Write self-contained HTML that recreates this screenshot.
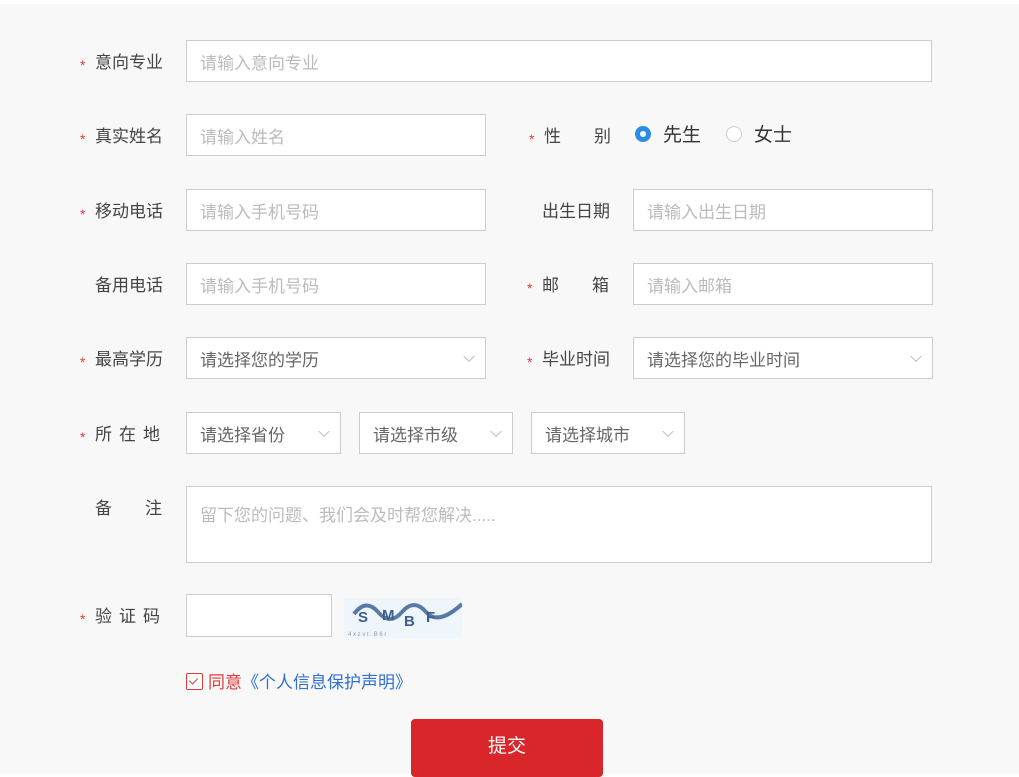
<!DOCTYPE html>
<html><head><meta charset="utf-8"><style>
body{margin:0;width:1019px;height:774px;background:#fff;font-family:"Liberation Sans","Noto Sans CJK SC",sans-serif;overflow:hidden;position:relative}
.bg{position:absolute;left:0;top:4px;width:1019px;height:770px;background:#f8f8f8}
.a{position:absolute}
.lab{position:absolute;font-size:17px;color:#444;line-height:20px;margin-top:2px}
.st{position:absolute;color:#e4393c;font-size:14px;line-height:20px;margin-top:2px}
.in{position:absolute;background:#fff;border:1px solid #ccc;box-sizing:border-box;font-size:17px;color:#bbb;padding-left:13px;display:flex;align-items:center}
.sel{color:#666}
.chev{position:absolute;right:12px;top:50%;width:7px;height:7px;border-right:1px solid #bbb;border-bottom:1px solid #bbb;transform:translateY(-70%) rotate(45deg)}
</style></head><body>
<div class="bg"></div>
<span class="st" style="left:80px;top:53px">*</span><span class="lab" style="left:95px;top:51px">意向专业</span>
<div class="in" style="left:186px;top:40px;width:746px;height:42px">请输入意向专业</div>

<span class="st" style="left:80px;top:127px">*</span><span class="lab" style="left:95px;top:125px">真实姓名</span>
<div class="in" style="left:186px;top:114px;width:300px;height:42px">请输入姓名</div>
<span class="st" style="left:529px;top:127px">*</span><span class="lab" style="left:544px;top:125px">性</span><span class="lab" style="left:594px;top:125px">别</span>
<div class="a" style="left:635px;top:126px;width:16px;height:16px;border-radius:50%;background:#2a8ae6;box-sizing:border-box"></div>
<div class="a" style="left:640px;top:131px;width:6px;height:6px;border-radius:50%;background:#fff"></div>
<span class="lab" style="left:663px;top:122px;font-size:19px;color:#333;line-height:24px">先生</span>
<div class="a" style="left:726px;top:126px;width:16px;height:16px;border-radius:50%;border:1px solid #ccc;box-sizing:border-box;background:#fff"></div>
<span class="lab" style="left:754px;top:122px;font-size:19px;color:#333;line-height:24px">女士</span>

<span class="st" style="left:80px;top:202px">*</span><span class="lab" style="left:95px;top:200px">移动电话</span>
<div class="in" style="left:186px;top:189px;width:300px;height:42px">请输入手机号码</div>
<span class="lab" style="left:542px;top:200px">出生日期</span>
<div class="in" style="left:633px;top:189px;width:300px;height:42px">请输入出生日期</div>

<span class="lab" style="left:95px;top:274px">备用电话</span>
<div class="in" style="left:186px;top:263px;width:300px;height:42px">请输入手机号码</div>
<span class="st" style="left:527px;top:276px">*</span><span class="lab" style="left:542px;top:274px">邮</span><span class="lab" style="left:592px;top:274px">箱</span>
<div class="in" style="left:633px;top:263px;width:300px;height:42px">请输入邮箱</div>

<span class="st" style="left:80px;top:350px">*</span><span class="lab" style="left:95px;top:348px">最高学历</span>
<div class="in sel" style="left:186px;top:337px;width:300px;height:42px">请选择您的学历<i class="chev"></i></div>
<span class="st" style="left:527px;top:350px">*</span><span class="lab" style="left:542px;top:348px">毕业时间</span>
<div class="in sel" style="left:633px;top:337px;width:300px;height:42px">请选择您的毕业时间<i class="chev"></i></div>

<span class="st" style="left:80px;top:425px">*</span><span class="lab" style="left:95px;top:423px;letter-spacing:7px">所在地</span>
<div class="in sel" style="left:186px;top:412px;width:155px;height:42px">请选择省份<i class="chev"></i></div>
<div class="in sel" style="left:359px;top:412px;width:154px;height:42px">请选择市级<i class="chev"></i></div>
<div class="in sel" style="left:531px;top:412px;width:154px;height:42px">请选择城市<i class="chev"></i></div>

<span class="lab" style="left:95px;top:497px">备</span><span class="lab" style="left:145px;top:497px">注</span>
<div class="in" style="left:186px;top:486px;width:746px;height:77px;align-items:flex-start;padding-top:14px">留下您的问题、我们会及时帮您解决.....</div>

<span class="st" style="left:80px;top:607px">*</span><span class="lab" style="left:95px;top:605px;letter-spacing:7px">验证码</span>
<div class="in" style="left:186px;top:594px;width:146px;height:43px"></div>
<svg class="a" style="left:344px;top:598px" width="118" height="40" viewBox="0 0 118 40">
<rect width="118" height="40" fill="#eef5fb"/>
<path d="M10 16 Q22 0 34 14 T58 14 T82 14 T118 6" stroke="#5a7aa6" stroke-width="4" fill="none"/>
<text x="14" y="24" font-size="15" font-weight="bold" fill="#3d5f8e" font-family="Liberation Sans">S</text>
<text x="38" y="22" font-size="15" font-weight="bold" fill="#3d5f8e" font-family="Liberation Sans">M</text>
<text x="60" y="28" font-size="15" font-weight="bold" fill="#3d5f8e" font-family="Liberation Sans">B</text>
<text x="82" y="24" font-size="15" font-weight="bold" fill="#3d5f8e" font-family="Liberation Sans">F</text>
<text x="4" y="38" font-size="6" fill="#999">4 x z v t . B 6 r</text>
</svg>

<div class="a" style="left:186px;top:673px;width:17px;height:17px;border:1px solid #e4393c;border-radius:2px;box-sizing:border-box;background:#fff"></div>
<div class="a" style="left:191px;top:676px;width:4px;height:7px;border-right:1px solid #e4393c;border-bottom:1px solid #e4393c;transform:rotate(45deg)"></div>
<span class="lab" style="left:208px;top:671px;color:#e4393c">同意<span style="color:#2f6fd6">《个人信息保护声明》</span></span>

<div class="a" style="left:411px;top:719px;width:192px;height:58px;background:#d9262a;border-radius:4px;color:#fff;font-size:19px;text-align:center;line-height:55px">提交</div>
</body></html>
